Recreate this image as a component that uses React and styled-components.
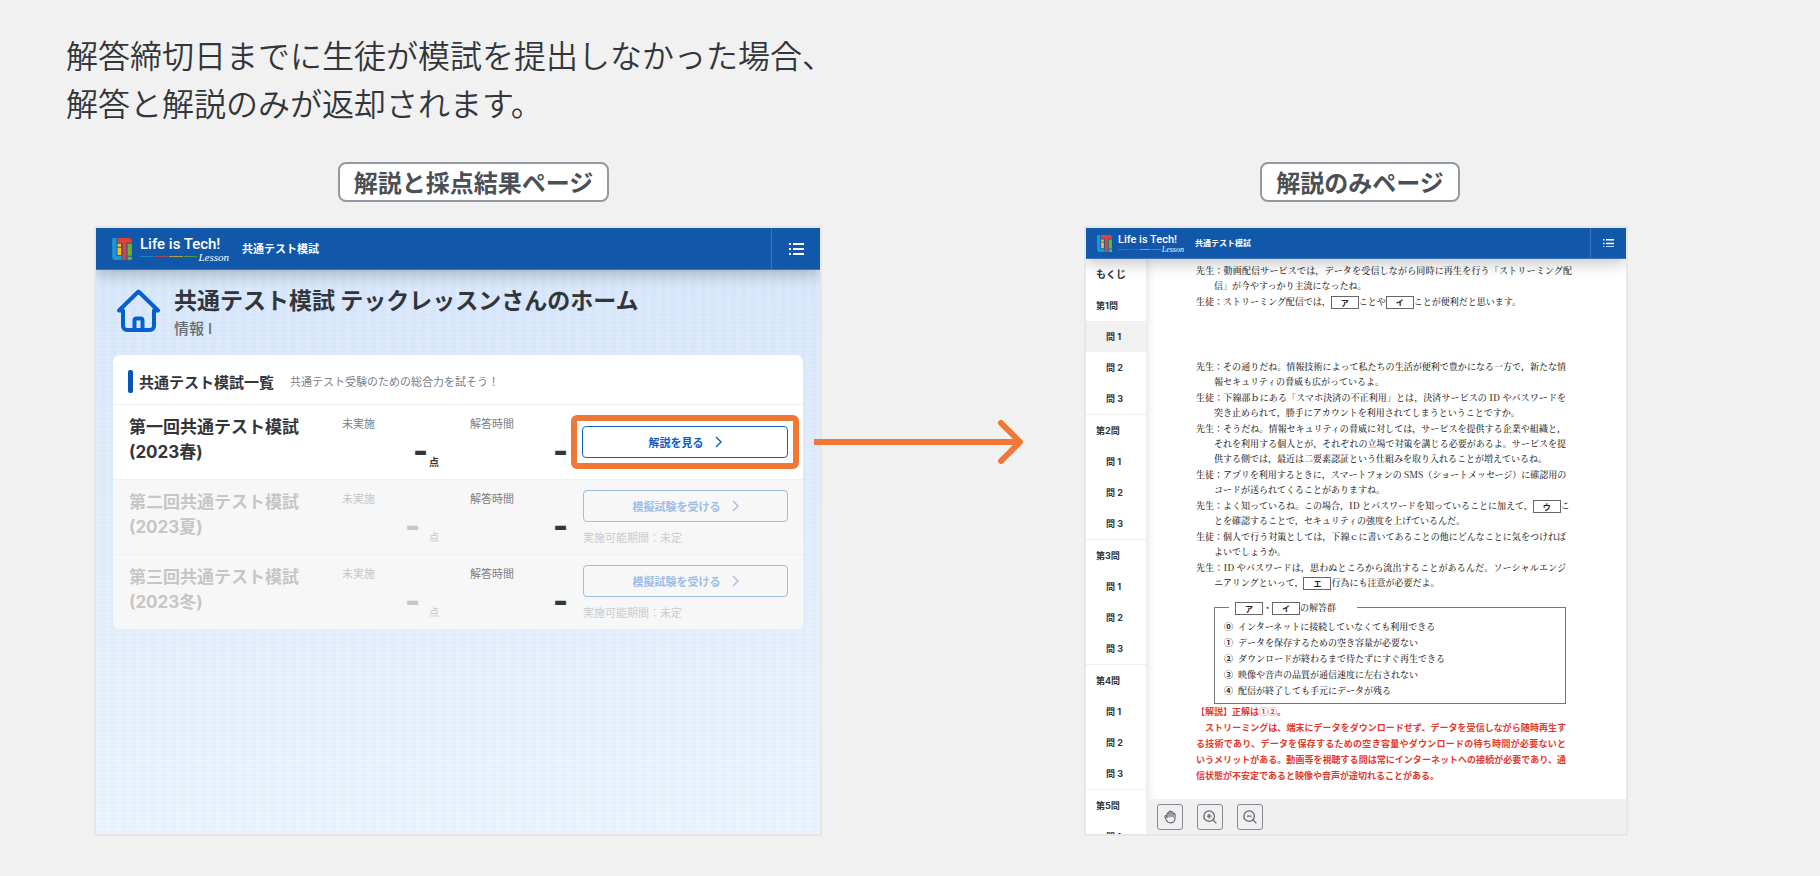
import React from 'react';
import styled, { createGlobalStyle } from 'styled-components';

const GlobalStyle = createGlobalStyle`
	*, *::before, *::after {
		box-sizing: border-box;
	}

	body {
		margin: 0;
		background: #f1f1f1;
		color: #32363b;
		font-family: "Inter", "Noto Sans CJK JP", sans-serif;
	}

	p, h1, h2, h3, ul, ol {
		margin: 0;
		padding: 0;
		list-style: none;
	}
`;

const Page = styled.main`
	padding: 30px 0 40px;
`;

const Lead = styled.p`
	padding: 0 66px;
	font-family: "Noto Sans CJK JP", sans-serif;
	font-size: 32px;
	font-weight: 350;
	line-height: 48px;
`;

const Flow = styled.div`
	display: grid;
	grid-template-columns: 728fr 262fr 544fr;
	padding: 36px 192px 0 94px;
`;

const Column = styled.section`
	display: flex;
	flex-direction: column;
	gap: 24px;
	min-width: 0;
`;

const PageLabel = styled.h2`
	align-self: center;
	margin-left: ${(p) => p.$shift};
	padding: 0 14px;
	border: 2px solid #9499a1;
	border-radius: 8px;
	background: #fff;
	color: #4b5056;
	font-family: "Noto Sans CJK JP", sans-serif;
	font-size: 24px;
	font-weight: 700;
	line-height: 36px;
`;

const Screen = styled.div`
	display: flex;
	flex: 1;
	flex-direction: column;
	overflow: hidden;
	border: 2px solid #e7e7e7;
	background: #fff;
`;

/* ---- app header ---- */

const Bar = styled.header`
	position: relative;
	z-index: 1;
	display: flex;
	align-items: stretch;
	height: ${(p) => (p.$small ? '31px' : '42px')};
	padding-left: ${(p) => (p.$small ? '11px' : '16px')};
	border-bottom: 1px solid #3b75bb;
	background: #1158ab;
	color: #fff;
	box-shadow: 0 4px 16px rgba(0, 0, 0, 0.24);
`;

const Brand = styled.a`
	display: flex;
	align-items: center;
	gap: ${(p) => (p.$small ? '6px' : '8px')};
	color: inherit;
	text-decoration: none;

	> svg {
		width: ${(p) => (p.$small ? '15px' : '20px')};
		height: ${(p) => (p.$small ? '17px' : '22px')};
	}
`;

const Wordmark = styled.span`
	display: flex;
	flex-direction: column;
	width: ${(p) => (p.$small ? '66px' : '89px')};
	font-family: "Roboto", sans-serif;
	font-size: ${(p) => (p.$small ? '11px' : '15px')};
	font-weight: 500;
	line-height: ${(p) => (p.$small ? '12px' : '16px')};
	white-space: nowrap;
`;

const Tagline = styled.span`
	display: flex;
	align-items: center;
	gap: 1px;
	font-family: "Liberation Serif", serif;
	font-size: ${(p) => (p.$small ? '8px' : '11px')};
	font-style: italic;
	font-weight: 400;
	line-height: ${(p) => (p.$small ? '7px' : '10px')};
`;

const Dash = styled.i`
	flex: 1;
	height: 1px;
	background: ${(p) => p.$color};
	opacity: 0.7;
`;

const BarTitle = styled.span`
	align-self: center;
	padding: ${(p) => (p.$small ? '0 0 1px 11px' : '0 0 1px 13px')};
	font-size: ${(p) => (p.$small ? '8px' : '11px')};
	font-weight: 700;
`;

const MenuButton = styled.button`
	display: flex;
	align-items: center;
	justify-content: center;
	width: ${(p) => (p.$small ? '36px' : '49px')};
	margin-left: auto;
	padding: 0;
	border: 0;
	border-left: 1px solid #3b75bb;
	background: none;
	color: inherit;

	svg {
		width: ${(p) => (p.$small ? '11px' : '15px')};
	}
`;

/* ---- home screen ---- */

const Home = styled.div`
	flex: 1;
	padding: 15px 17px 40px;
	background-color: #dbe9fb;
	background-image:
		linear-gradient(90deg, rgba(255, 255, 255, 0.12) 50%, transparent 50%),
		linear-gradient(rgba(190, 215, 245, 0.1) 50%, transparent 50%),
		linear-gradient(#d6e6fa, #ebf3fd);
	background-size: 10px 9px, 14px 4px, 100% 100%;
`;

const HomeHead = styled.div`
	display: flex;
	gap: 13px;
	padding: 0 3px 15px;

	> svg {
		width: 45px;
		height: 45px;
		margin-top: 3px;
	}
`;

const HomeTitle = styled.h1`
	font-family: "Noto Sans CJK JP", sans-serif;
	font-size: 23px;
	font-weight: 700;
	line-height: 29px;
`;

const Subject = styled.p`
	padding-top: 4px;
	color: #666c74;
	font-size: 15px;
	font-weight: 500;
	line-height: 22px;
`;

const Card = styled.section`
	overflow: hidden;
	border-radius: 7px;
	background: #fff;
`;

const CardHead = styled.div`
	display: flex;
	align-items: center;
	height: 49px;
	padding: 3px 15px 0;

	&::before {
		content: "";
		width: 5px;
		height: 23px;
		margin-right: 6px;
		border-radius: 2px;
		background: #0654b5;
	}
`;

const CardTitle = styled.h2`
	font-size: 15px;
	font-weight: 700;
`;

const CardNote = styled.p`
	padding-left: 16px;
	color: #7b8087;
	font-size: 11px;
`;

const Exam = styled.li`
	display: grid;
	grid-template-columns: 1fr 128px 113px 205px;
	height: 75px;
	padding: 0 15px 0 16px;
	border-top: 1px solid #f0f0f0;
	background: ${(p) => (p.$closed ? '#f7f7f7' : '#fff')};
`;

const ExamName = styled.h3`
	padding-top: 10px;
	color: ${(p) => (p.$closed ? '#c6c6c6' : 'inherit')};
	font-size: 17px;
	font-weight: 700;
	line-height: 25px;
`;

const Stat = styled.div`
	padding: 11px ${(p) => (p.$score ? '31px' : '15px')} 0 0;
	color: ${(p) => (p.$faded ? '#c6c6c6' : '#7b8087')};
	font-size: 11px;
	line-height: 16px;
`;

const StatValue = styled.p`
	display: flex;
	align-items: flex-end;
	justify-content: flex-end;
	gap: ${(p) => (p.$faded ? '9px' : '1px')};
	padding-top: 7px;
	color: ${(p) => (p.$faded ? '#c6c6c6' : '#32363b')};
	font-size: 32px;
	font-weight: 800;
	line-height: 24px;

	small {
		margin-bottom: -5px;
		font-size: 10px;
		font-weight: ${(p) => (p.$faded ? 400 : 700)};
		line-height: 12px;
	}
`;

const Action = styled.div`
	padding-top: ${(p) => (p.$closed ? '10px' : '21px')};
`;

const Highlight = styled.div`
	margin: -11px -11px 0 -12px;
	padding: 5px;
	border: 6px solid #f07837;
	border-radius: 6px;
`;

const ExamButton = styled.button`
	display: flex;
	align-items: center;
	justify-content: center;
	gap: 11px;
	width: 100%;
	height: 32px;
	padding: 0;
	border: 1px solid #1462bf;
	border-radius: 4px;
	background: transparent;
	color: #0b5cbf;
	font-family: inherit;
	font-size: 11px;
	font-weight: 700;

	&:disabled {
		border-color: #9dbde6;
		color: #9dbde6;
	}
`;

const Period = styled.p`
	padding-top: 8px;
	color: #cbcbcb;
	font-size: 11px;
	line-height: 16px;
`;

/* ---- arrow between the screens ---- */

const ArrowCell = styled.div`
	position: relative;
	z-index: 2;
	padding-top: 257px;

	svg {
		display: block;
		width: 212px;
		margin-left: -8px;
	}
`;

/* ---- commentary screen ---- */

const Reader = styled.div`
	display: flex;
	flex: 1;
`;

const Contents = styled.nav`
	flex: 0 0 60px;
	height: 0;
	min-height: 100%;
	overflow: hidden;
	box-shadow: 0 0 10px rgba(0, 0, 0, 0.16);
`;

const ContentsGroup = styled.ul`
	border-top: ${(p) => (p.$first ? '0' : '1px solid #efefef')};
`;

const ContentsLink = styled.a`
	display: block;
	padding-left: ${(p) => (p.$sub ? '20px' : '10px')};
	background: ${(p) => (p.$active ? '#f1f1f1' : 'transparent')};
	color: #32363b;
	font-size: ${(p) => (p.$top ? '10px' : '9px')};
	font-weight: 700;
	line-height: 31px;
	text-decoration: none;
`;

const Viewer = styled.div`
	display: flex;
	flex: 1;
	flex-direction: column;
	min-width: 0;
`;

const Sheet = styled.article`
	flex: 1;
	padding: 4px 60px 15px 50px;
	font-family: "Noto Serif CJK JP", "Noto Sans CJK JP", serif;
	font-size: 9px;
	font-weight: 500;
	line-height: 15px;
	color: #2a2a2a;
`;

const Talk = styled.div`
	display: flex;
	flex-direction: column;
	gap: 1px;
	margin-bottom: ${(p) => (p.$loose ? '50px' : '10px')};
`;

const Speech = styled.p`
	padding-left: 18px;
	white-space: nowrap;
`;

const Line = styled.span`
	display: block;
	margin-left: ${(p) => (p.$first ? '-18px' : '0')};
	text-align-last: ${(p) => (p.$full ? 'justify' : 'auto')};
	margin-right: ${(p) => (p.$wide ? '-6px' : '0')};
`;

const Blank = styled.b`
	display: inline-block;
	width: 28px;
	height: 13px;
	margin: -1px 0;
	border: 1px solid #666;
	color: #222;
	font-family: "Noto Sans CJK JP", sans-serif;
	font-size: 8px;
	line-height: 11px;
	text-align: center;
	text-align-last: center;
	vertical-align: middle;
`;

const Choices = styled.fieldset`
	margin: 0 0 0 18px;
	padding: 4px 9px 4px;
	border: 1px solid #777;

	legend {
		margin-left: 5px;
		padding: 0 21px 0 6px;
		line-height: 15px;
	}

	li {
		display: flex;
		gap: 5px;
		line-height: 16px;
	}
`;

const Mark = styled.b`
	width: 9px;
	font-family: "Noto Sans CJK JP", sans-serif;
`;

const Answer = styled.p`
	color: #e33a2e;
	font-family: "Noto Sans CJK JP", sans-serif;
	font-weight: 700;
	line-height: 16px;
	white-space: nowrap;
`;

const Tools = styled.div`
	display: flex;
	gap: 14px;
	padding: 5px 10px 4px 11px;
	background: #f0f0f0;
`;

const Tool = styled.button`
	display: flex;
	align-items: center;
	justify-content: center;
	width: 26px;
	height: 26px;
	padding: 0;
	border: 1px solid #858a92;
	border-radius: 3px;
	background: transparent;
	color: #5f656d;

	svg {
		width: 14px;
		height: 14px;
	}
`;

const LogoIcon = () => (
	<svg viewBox="0 0 59 66" aria-hidden="true">
		<path fill="#1e96d4" d="M0 0h13v53h16v13H9a9 9 0 0 1-9-9z" />
		<path fill="#e2413a" d="M16 0h35a8 8 0 0 1 8 8v6H43v52H31V14H16z" />
		<path fill="#f3c01c" d="M16 17h11v9H16zM16 29h11v22H16z" />
		<path fill="#6ab42d" d="M46 17h13v36H46zM46 56h13v10H46z" />
	</svg>
);

const MenuIcon = () => (
	<svg viewBox="0 0 15 12" fill="currentColor" aria-hidden="true">
		<path d="M0 0h2v2H0zM4 0h11v2H4zM0 5h2v2H0zM4 5h11v2H4zM0 10h2v2H0zM4 10h11v2H4z" />
	</svg>
);

const HouseIcon = () => (
	<svg viewBox="0 0 45 45" fill="none" stroke="#0660d0" strokeWidth="4" strokeLinejoin="round" strokeLinecap="round" aria-hidden="true">
		<path d="M3 22.500 22.500 3.500 42 22.500h-4V38a4 4 0 0 1-4 4H11a4 4 0 0 1-4-4V22.500z" />
		<path d="M18.500 42V32.500a2 2 0 0 1 2-2h4a2 2 0 0 1 2 2V42" />
	</svg>
);

const Chevron = () => (
	<svg width="7" height="12" viewBox="0 0 7 12" fill="none" stroke="currentColor" strokeWidth="1.4" aria-hidden="true">
		<path d="M1 1l5 5-5 5" />
	</svg>
);

const ArrowIcon = () => (
	<svg viewBox="0 0 212 46" fill="none" stroke="#f07837" strokeWidth="6" aria-hidden="true">
		<path d="M0 23h204" />
		<path d="M187 4l19 19-19 19" strokeLinecap="round" strokeLinejoin="round" />
	</svg>
);

const HandIcon = () => (
	<svg viewBox="0 0 24 24" fill="none" stroke="currentColor" strokeWidth="2" strokeLinejoin="round" strokeLinecap="round" aria-hidden="true">
		<path d="M7 13V6.500a1.700 1.700 0 0 1 3.400 0V12M10.400 11V3.700a1.700 1.700 0 0 1 3.400 0V11M13.800 11V4.700a1.700 1.700 0 0 1 3.400 0V12M17.200 12V7.500a1.700 1.700 0 0 1 3.400 0V14a8 8 0 0 1-8 8c-4 0-6-2-7.500-5.500L3.500 12c-.6-2 1.700-3 2.700-1.300L7 13" />
	</svg>
);

const ZoomIcon = ({ plus }) => (
	<svg viewBox="0 0 24 24" fill="none" stroke="currentColor" strokeWidth="2.2" aria-hidden="true">
		<circle cx="10.500" cy="10.500" r="9" />
		<path d="M17 17l6 6M6.500 10.500h8" />
		{plus && <path d="M10.500 6.500v8" />}
	</svg>
);

const AppBar = ({ small }) => (
	<Bar $small={small}>
		<Brand href="#" $small={small}>
			<LogoIcon />
			<Wordmark $small={small}>
				Life is Tech!
				<Tagline $small={small}>
					<Dash $color="#1e96d4" />
					<Dash $color="#e2413a" />
					<Dash $color="#f3c01c" />
					<Dash $color="#6ab42d" />
					Lesson
				</Tagline>
			</Wordmark>
		</Brand>
		<BarTitle $small={small}>共通テスト模試</BarTitle>
		<MenuButton $small={small} type="button" aria-label="メニュー">
			<MenuIcon />
		</MenuButton>
	</Bar>
);

const exams = [
	{ name: '第一回共通テスト模試', term: '(2023春)', closed: false },
	{ name: '第二回共通テスト模試', term: '(2023夏)', closed: true },
	{ name: '第三回共通テスト模試', term: '(2023冬)', closed: true },
];

const ExamRow = ({ name, term, closed }) => (
	<Exam $closed={closed}>
		<ExamName $closed={closed}>
			{name}<br />{term}
		</ExamName>
		<Stat $score $faded={closed}>
			未実施
			<StatValue $faded={closed}>-<small>点</small></StatValue>
		</Stat>
		<Stat>
			解答時間
			<StatValue>-</StatValue>
		</Stat>
		<Action $closed={closed}>
			{closed ? (
				<>
					<ExamButton type="button" disabled>模擬試験を受ける <Chevron /></ExamButton>
					<Period>実施可能期間：未定</Period>
				</>
			) : (
				<Highlight>
					<ExamButton type="button">解説を見る <Chevron /></ExamButton>
				</Highlight>
			)}
		</Action>
	</Exam>
);

const chapters = [1, 2, 3, 4, 5];
const questions = [1, 2, 3];

const choices = [
	['⓪', 'インターネットに接続していなくても利用できる'],
	['①', 'データを保存するための空き容量が必要ない'],
	['②', 'ダウンロードが終わるまで待たずにすぐ再生できる'],
	['③', '映像や音声の品質が通信速度に左右されない'],
	['④', '配信が終了しても手元にデータが残る'],
];

const App = () => {
	return (
		<>
			<GlobalStyle />
			<Page>
				<Lead>
					解答締切日までに生徒が模試を提出しなかった場合、<br />
					解答と解説のみが返却されます。
				</Lead>
				<Flow>
					<Column>
						<PageLabel $shift="31px">解説と採点結果ページ</PageLabel>
						<Screen>
							<AppBar />
							<Home>
								<HomeHead>
									<HouseIcon />
									<div>
										<HomeTitle>共通テスト模試 テックレッスンさんのホーム</HomeTitle>
										<Subject>情報 I</Subject>
									</div>
								</HomeHead>
								<Card>
									<CardHead>
										<CardTitle>共通テスト模試一覧</CardTitle>
										<CardNote>共通テスト受験のための総合力を試そう！</CardNote>
									</CardHead>
									<ul>
										{exams.map((exam) => <ExamRow key={exam.name} {...exam} />)}
									</ul>
								</Card>
							</Home>
						</Screen>
					</Column>

					<ArrowCell>
						<ArrowIcon />
					</ArrowCell>

					<Column>
						<PageLabel $shift="8px">解説のみページ</PageLabel>
						<Screen>
							<AppBar small />
							<Reader>
								<Contents>
									<ContentsLink href="#" $top>もくじ</ContentsLink>
									{chapters.map((chapter) => (
										<ContentsGroup key={chapter} $first={chapter === 1}>
											<li><ContentsLink href="#">第{chapter}問</ContentsLink></li>
											{questions.map((q) => (
												<li key={q}>
													<ContentsLink href="#" $sub $active={chapter === 1 && q === 1}>問 {q}</ContentsLink>
												</li>
											))}
										</ContentsGroup>
									))}
								</Contents>
								<Viewer>
									<Sheet>
										<Talk $loose>
											<Speech>
												<Line $first $full $wide>先生：動画配信サービスでは，データを受信しながら同時に再生を行う「ストリーミング配</Line>
												<Line>信」が今やすっかり主流になったね。</Line>
											</Speech>
											<Speech>
												<Line $first>生徒：ストリーミング配信では，<Blank>ア</Blank>ことや<Blank>イ</Blank>ことが便利だと思います。</Line>
											</Speech>
										</Talk>
										<Talk>
											<Speech>
												<Line $first $full>先生：その通りだね。情報技術によって私たちの生活が便利で豊かになる一方で，新たな情</Line>
												<Line>報セキュリティの脅威も広がっているよ。</Line>
											</Speech>
											<Speech>
												<Line $first $full>生徒：下線部ｂにある「スマホ決済の不正利用」とは，決済サービスの ID やパスワードを</Line>
												<Line>突き止められて，勝手にアカウントを利用されてしまうということですか。</Line>
											</Speech>
											<Speech>
												<Line $first $full>先生：そうだね。情報セキュリティの脅威に対しては，サービスを提供する企業や組織と，</Line>
												<Line $full>それを利用する個人とが，それぞれの立場で対策を講じる必要があるよ。サービスを提</Line>
												<Line>供する側では，最近は二要素認証という仕組みを取り入れることが増えているね。</Line>
											</Speech>
											<Speech>
												<Line $first $full>生徒：アプリを利用するときに，スマートフォンの SMS（ショートメッセージ）に確認用の</Line>
												<Line>コードが送られてくることがありますね。</Line>
											</Speech>
											<Speech>
												<Line $first $full>先生：よく知っているね。この場合，ID とパスワードを知っていることに加えて，<Blank>ウ</Blank>こ</Line>
												<Line>とを確認することで，セキュリティの強度を上げているんだ。</Line>
											</Speech>
											<Speech>
												<Line $first $full>生徒：個人で行う対策としては，下線ｃに書いてあることの他にどんなことに気をつければ</Line>
												<Line>よいでしょうか。</Line>
											</Speech>
											<Speech>
												<Line $first $full>先生：ID やパスワードは，思わぬところから流出することがあるんだ。ソーシャルエンジ</Line>
												<Line>ニアリングといって，<Blank>エ</Blank>行為にも注意が必要だよ。</Line>
											</Speech>
										</Talk>
										<Choices>
											<legend><Blank>ア</Blank>・<Blank>イ</Blank>の解答群</legend>
											<ol>
												{choices.map(([mark, text]) => (
													<li key={mark}><Mark>{mark}</Mark>{text}</li>
												))}
											</ol>
										</Choices>
										<Answer>
											<Line>【解説】正解は①②。</Line>
											<Line $full>　ストリーミングは、端末にデータをダウンロードせず、データを受信しながら随時再生す</Line>
											<Line $full>る技術であり、データを保存するための空き容量やダウンロードの待ち時間が必要ないと</Line>
											<Line $full>いうメリットがある。動画等を視聴する間は常にインターネットへの接続が必要であり、通</Line>
											<Line>信状態が不安定であると映像や音声が途切れることがある。</Line>
										</Answer>
									</Sheet>
									<Tools>
										<Tool type="button" aria-label="移動"><HandIcon /></Tool>
										<Tool type="button" aria-label="拡大"><ZoomIcon plus /></Tool>
										<Tool type="button" aria-label="縮小"><ZoomIcon /></Tool>
									</Tools>
								</Viewer>
							</Reader>
						</Screen>
					</Column>
				</Flow>
			</Page>
		</>
	);
};

export default App;
